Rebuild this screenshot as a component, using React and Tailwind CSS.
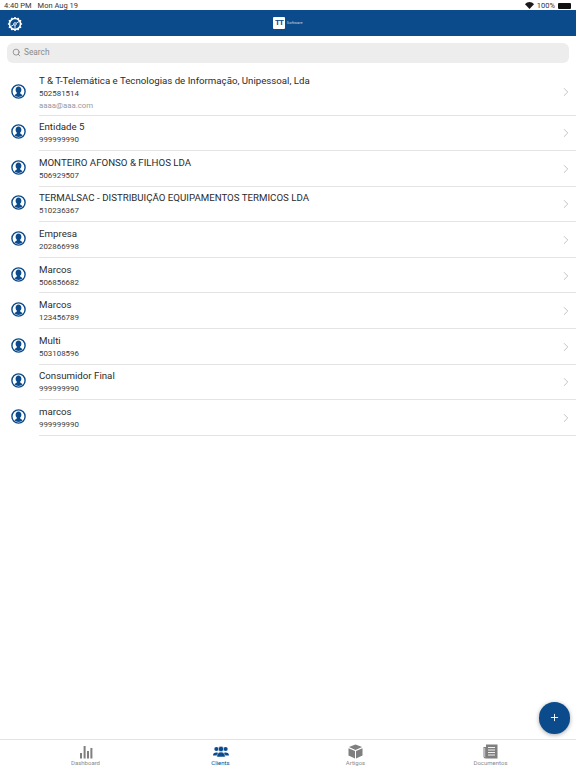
import React from 'react';
import { Search, ChevronRight, Plus } from 'lucide-react';

const rows = [
  ['T & T-Telemática e Tecnologias de Informação, Unipessoal, Lda', '502581514', 'aaaa@aaa.com'],
  ['Entidade 5', '999999990'],
  ['MONTEIRO AFONSO & FILHOS LDA', '506929507'],
  ['TERMALSAC - DISTRIBUIÇÃO EQUIPAMENTOS TERMICOS LDA', '510236367'],
  ['Empresa', '202866998'],
  ['Marcos', '506856682'],
  ['Marcos', '123456789'],
  ['Multi', '503108596'],
  ['Consumidor Final', '999999990'],
  ['marcos', '999999990'],
];

function Gear() {
  const teeth = Array.from({ length: 12 }, (_, i) => i * 30);
  return (
    <svg width="16" height="16" viewBox="0 0 16 16" fill="none" stroke="#fff">
      <circle cx="8" cy="8" r="5.5" strokeWidth="1.5" />
      {teeth.map((a) => (
        <line key={a} x1="8" y1="0.9" x2="8" y2="2.6" strokeWidth="1.5" transform={`rotate(${a} 8 8)`} />
      ))}
      <circle cx="8" cy="8" r="1.3" strokeWidth="0.9" />
      <path d="M9.2 7.2L12.6 5.2M6.9 8.7L3.7 10.5M8 9.4V12.8" strokeWidth="0.9" />
    </svg>
  );
}

function Avatar() {
  return (
    <svg width="15" height="15" viewBox="0 0 15 15" className="shrink-0">
      <circle cx="7.5" cy="7.5" r="6.6" fill="#fff" stroke="#0b4a8b" strokeWidth="1.4" />
      <path d="M7.5 2.6c-1.8 0-2.9 1.4-2.9 3.2 0 1.2.5 2.2 1.2 2.8v1L3.3 11.2a6 6 0 0 0 8.4 0L9.2 9.6v-1c.7-.6 1.2-1.6 1.2-2.8 0-1.8-1.1-3.2-2.9-3.2z" fill="#0b4a8b" />
    </svg>
  );
}

function Row({ name, num, email }) {
  return (
    <div className={`flex items-center pl-[10.5px] ${email ? 'h-[48.5px]' : 'h-[35.6px]'}`}>
      <div className={`w-[28.5px] shrink-0 flex ${email ? '' : 'mb-[3px]'}`}><Avatar /></div>
      <div className="flex-1 h-full flex items-center border-b border-[#e4e4e4] pr-[3.5px]">
        <div className={`flex-1 min-w-0 flex flex-col ${email ? 'pt-[4px]' : ''}`}>
          <span className="text-[9.7px] leading-[13px] text-[#2b2b2b]">{name}</span>
          <span className="text-[7.9px] leading-[11px] mt-[1px] text-[#3a3a3a]">{num}</span>
          {email && <span className="text-[7.8px] leading-[12px] mt-px text-[#9a9a9a]">{email}</span>}
        </div>
        <ChevronRight size={14} strokeWidth={1.4} color="#b5b5b5" className={email ? 'mt-[2px]' : 'mt-[1px]'} />
      </div>
    </div>
  );
}

function Tab({ icon, label, active }) {
  return (
    <div className="flex-1 flex flex-col items-center pt-[4px]">
      <div className="h-[15px] flex items-center justify-center">{icon}</div>
      <span className={`text-[6px] leading-[8px] ${active ? 'text-[#0b4a8b]' : 'text-[#8a8a8a]'}`}>{label}</span>
    </div>
  );
}

const BarsIcon = (
  <svg width="14" height="14" viewBox="0 0 14 14" fill="#7f7f7f">
    <rect x="1" y="8" width="2" height="5.5" /><rect x="4.6" y="1" width="2" height="12.5" /><rect x="8" y="6" width="2" height="7.5" /><rect x="11.4" y="3" width="2" height="10.5" />
  </svg>
);
const PeopleIcon = (
  <svg width="16" height="11" viewBox="0 0 16 11" fill="#0b4a8b">
    <circle cx="3.4" cy="3" r="2.1" /><circle cx="12.6" cy="3" r="2.1" /><path d="M0 9.6c0-2 1.2-3 3.4-3s2 .6 2 3z" /><path d="M16 9.6c0-2-1.2-3-3.4-3s-2 .6-2 3z" />
    <circle cx="8" cy="3" r="2.7" stroke="#fff" strokeWidth=".5" /><path d="M3.8 11c0-3 1.4-5 4.2-5s4.2 2 4.2 5z" stroke="#fff" strokeWidth=".5" />
  </svg>
);
const BoxIcon = (
  <svg width="15" height="15" viewBox="0 0 15 15" fill="#7f7f7f">
    <path d="M7.5.5l6.6 2.6-6.6 2.8L.9 3.1z" /><path d="M.5 4.2l6.5 2.7v7.6L.5 11.6z" /><path d="M14.5 4.2L8 6.9v7.6l6.5-2.9z" />
  </svg>
);
const DocIcon = (
  <svg width="15" height="15" viewBox="0 0 15 15">
    <path d="M3 .5h11.5v14H2.5a2 2 0 0 1-2-2V3H3z" fill="#7f7f7f" />
    <path d="M1.7 4v8.4c0 .5.3.9.6.9" stroke="#fff" strokeWidth=".6" fill="none" />
    <path d="M5 3.5h7M5 6h7M5 8.5h7M5 11h7" stroke="#fff" strokeWidth=".9" />
  </svg>
);
const WifiIcon = (
  <svg width="9" height="7" viewBox="0 0 9 7" fill="#1a1a1a">
    <path d="M4.5 7L0 2.2C2.6-.6 6.4-.6 9 2.2z" />
  </svg>
);

export default function App() {
  return (
    <div className="relative w-[576px] h-[768px] bg-white flex flex-col overflow-hidden" style={{ fontFamily: 'Roboto, "Liberation Sans", Arial, sans-serif' }}>
      <div className="h-[10px] shrink-0 bg-white flex items-center justify-between pl-[4px] pr-[5px] pt-[1px] text-[7.5px] leading-none text-[#333]">
        <div className="flex gap-[6px]"><span>4:40 PM</span><span>Mon Aug 19</span></div>
        <div className="flex items-center gap-[3px]">
          {WifiIcon}
          <span>100%</span>
          <span className="w-[13px] h-[6px] bg-[#111] rounded-[1px]" />
        </div>
      </div>
      <header className="relative h-[26px] shrink-0 bg-[#0b4a8b] flex items-center justify-center">
        <div className="absolute left-[7px] top-[6px]"><Gear /></div>
        <div className="flex items-center gap-[1px]">
          <div className="w-[11.5px] h-[11.5px] bg-white rounded-[1px] flex items-center justify-center text-[#0b4a8b] text-[8px] font-bold leading-none tracking-[-1px]">TT</div>
          <span className="text-[4px] text-[#c9d8e8] ml-[1px]">Software</span>
        </div>
      </header>

      <div className="px-[7px] pt-[6.5px] pb-[4.5px]">
        <div className="h-[20px] bg-[#ededed] rounded-[6px] flex items-center pl-[5px] gap-[3px]">
          <Search size={9} strokeWidth={2} color="#7d7d7d" />
          <span className="text-[8.3px] text-[#8a8a8a]">Search</span>
        </div>
      </div>

      <main className="flex-1 flex flex-col">
        {rows.map((r, i) => <Row key={i} name={r[0]} num={r[1]} email={r[2]} />)}
      </main>

      <button className="absolute left-[538.5px] top-[702px] w-[31.5px] h-[31.5px] rounded-full bg-[#0b4a8b] flex items-center justify-center shadow-[0_1px_4px_rgba(0,0,0,0.35)]">
        <Plus size={11} strokeWidth={2} color="#fff" />
      </button>

      <nav className="h-[29px] shrink-0 border-t border-[#e4e4e4] flex px-[18px]">
        <Tab icon={BarsIcon} label="Dashboard" />
        <Tab icon={PeopleIcon} label="Clients" active />
        <Tab icon={BoxIcon} label="Artigos" />
        <Tab icon={DocIcon} label="Documentos" />
      </nav>
    </div>
  );
}
